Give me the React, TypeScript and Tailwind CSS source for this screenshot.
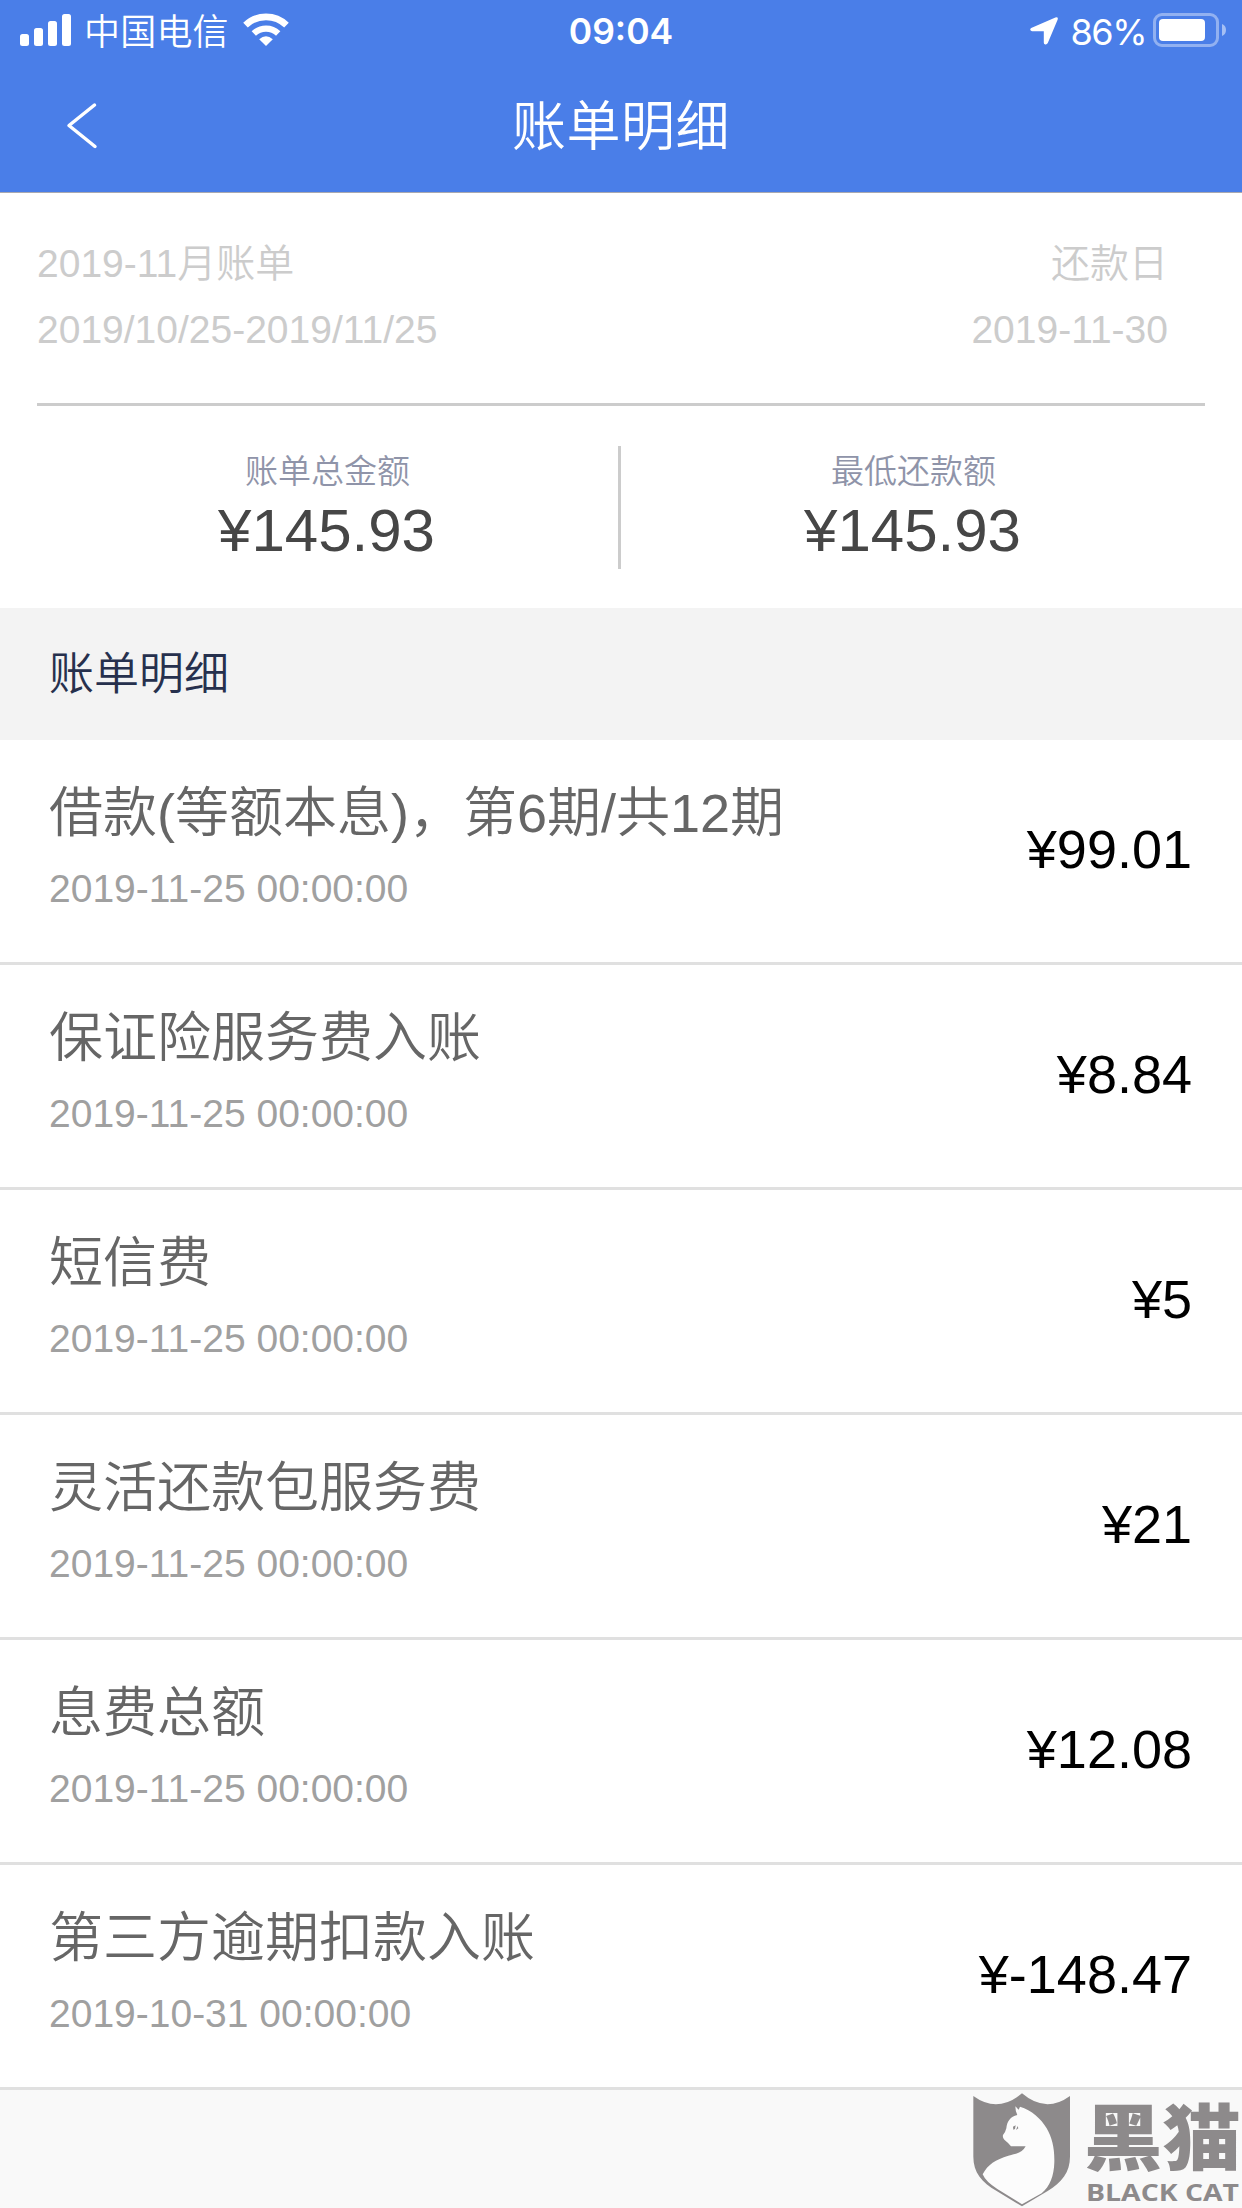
const rows = [
  { title: "借款(等额本息)，第6期/共12期", time: "2019-11-25 00:00:00", amount: "¥99.01" },
  { title: "保证险服务费入账", time: "2019-11-25 00:00:00", amount: "¥8.84" },
  { title: "短信费", time: "2019-11-25 00:00:00", amount: "¥5" },
  { title: "灵活还款包服务费", time: "2019-11-25 00:00:00", amount: "¥21" },
  { title: "息费总额", time: "2019-11-25 00:00:00", amount: "¥12.08" },
  { title: "第三方逾期扣款入账", time: "2019-10-31 00:00:00", amount: "¥-148.47" },
];

function StatusBar() {
  return (
    <div className="relative flex h-[60px] items-center justify-between pl-5 pr-4 text-[36px] leading-[60px]">
      <div className="flex items-center">
        <svg className="h-8 w-[51px]" viewBox="0 0 51 32" fill="currentColor">
          <rect x="0" y="20" width="9" height="12" rx="2.5" />
          <rect x="14" y="14" width="9" height="18" rx="2.5" />
          <rect x="28" y="7" width="9" height="25" rx="2.5" />
          <rect x="42" y="0" width="9" height="32" rx="2.5" />
        </svg>
        <span className="ml-[13px] pt-[5px] font-[350] tracking-[.2px]">中国电信</span>
        <svg className="ml-[14px] -mt-px h-[33px] w-[46px]" viewBox="0 0 46 33" fill="none" stroke="currentColor">
          <path d="M2.5 12.2A29.5 29.5 0 0 1 43.5 12.2" strokeWidth="6.6" />
          <path d="M10.8 20.5A17.5 17.5 0 0 1 35.2 20.5" strokeWidth="6.2" />
          <path d="M23 33 16.2 26.2Q23 20.4 29.8 26.2Z" fill="currentColor" stroke="none" />
        </svg>
      </div>
      <div className="absolute inset-x-0 pt-[3px] text-center font-[Inter] text-[35.5px] font-semibold">09:04</div>
      <div className="flex items-center font-[Inter]">
        <svg className="mr-[13px] mt-px h-7 w-7" viewBox="0 0 28 28" fill="currentColor">
          <path d="M1.2 11 25.4.4Q28.6-.4 27.6 2.8L17.8 26Q16.6 28 14.8 27.2 13.8 26.8 13.8 25.4V14.2H2Q.2 14 .2 12.6.2 11.5 1.2 11Z" />
        </svg>
        <span className="pt-[3px] tracking-[-1.5px]">86%</span>
        <svg className="ml-[7px] h-[34px] w-[73px]" viewBox="0 0 73 34">
          <rect x="1.5" y="1.5" width="63" height="31" rx="7.5" fill="none" stroke="white" strokeOpacity=".4" strokeWidth="3" />
          <rect x="6" y="6" width="46" height="22" rx="4" fill="white" />
          <path d="M69 11Q73 12.5 73 17T69 23Z" fill="white" fillOpacity=".5" />
        </svg>
      </div>
    </div>
  );
}

function Total({ label, value }: { label: string; value: string }) {
  return (
    <div className="flex w-[579px] flex-col items-center">
      <div className="pt-[3px] pl-[2px] text-[33px] leading-[46px] font-[350] text-[#8f94a9]">{label}</div>
      <div className="text-[60px] leading-[72px] text-[#464646]">{value}</div>
    </div>
  );
}

function BlackCatMark() {
  return (
    <svg className="h-[118px] w-[277px]" viewBox="965 2090 277 118" fill="#8d8a8b">
      <g transform="translate(965 2085) scale(.3333)">
        <path d="M25 33Q98 86 171 25 242 86 315 33V215C315 262 290 292 248 318L171 364 95 318C50 292 25 262 25 215Z" />
        <path
          fill="#fcfcfc"
          d="M151 64 161 74 165 65C200 76 228 100 245 130 262 160 269 190 268 232 267 272 255 305 230 325L171 358 97 312Q62 290 53 268C68 238 92 224 130 212 158 206 172 202 182 184L138 184Q132 175 118 164 112 158 114 150 122 140 124 130C126 110 136 94 157 90Q151 78 151 64Z"
        />
        <path d="M152 121 144 125 145 134 150 132ZM158 123 153 135 160 130Z" />
      </g>
      <text x="1084" y="2164" textLength="157" lengthAdjust="spacingAndGlyphs" fontSize="72" className="font-['Noto_Sans_CJK_SC'] font-black">黑猫</text>
      <text x="1086" y="2201" textLength="153" lengthAdjust="spacingAndGlyphs" fontSize="23.5" className="font-['Open_Sans'] font-bold">BLACK CAT</text>
    </svg>
  );
}

export default function App() {
  return (
    <div className="flex h-[2208px] w-[1242px] flex-col overflow-hidden bg-white font-['Liberation_Sans','Noto_Sans_CJK_SC',sans-serif]">
      <header className="h-[193px] shrink-0 border-b border-[#a9a9b0] bg-[#4a7ee8] text-white">
        <StatusBar />
        <div className="relative flex h-[132px] items-center justify-center">
          <svg className="absolute left-[66px] top-[42px] h-[47px] w-8" viewBox="0 0 32 47" fill="none" stroke="white" strokeWidth="3.5" strokeLinecap="round" strokeLinejoin="round">
            <path d="M28.5 3 3 23.5 29 44.5" />
          </svg>
          <h1 className="pt-[2px] text-[54px] leading-[80px] font-[350] tracking-[.5px]">账单明细</h1>
        </div>
      </header>

      <section className="h-[415px] shrink-0 px-[37px] pt-[38px]">
        <div className="flex justify-between pr-[37px] text-[39px] leading-[66px] font-[350] text-[#ccc]">
          <div>
            <div>2019-11月账单</div>
            <div>2019/10/25-2019/11/25</div>
          </div>
          <div className="text-right">
            <div>还款日</div>
            <div>2019-11-30</div>
          </div>
        </div>
        <div className="mt-10 h-[3px] bg-[#ccc]" />
        <div className="mt-10 flex">
          <Total label="账单总金额" value="¥145.93" />
          <div className="mx-[2px] h-[123px] w-[3px] bg-[#ccc]" />
          <Total label="最低还款额" value="¥145.93" />
        </div>
      </section>

      <h2 className="h-[132px] shrink-0 bg-[#f3f3f3] pl-[49px] text-[45px] leading-[133px] font-[350] text-[#26304d]">账单明细</h2>

      <ul className="shrink-0">
        {rows.map((row) => (
          <li key={row.title} className="flex h-[225px] items-center justify-between border-b-[3px] border-[#e0e0e0] pl-[49px] pr-[50px] pb-1">
            <div>
              <div className="text-[54px] leading-[80px] font-[350] text-[#666]">{row.title}</div>
              <div className="text-[39px] leading-[72px] text-[#a0a0a0]">{row.time}</div>
            </div>
            <div className="pt-px text-[54px] text-black">{row.amount}</div>
          </li>
        ))}
      </ul>

      <footer className="flex flex-1 items-end justify-end bg-[#f9f9f9]">
        <BlackCatMark />
      </footer>
    </div>
  );
}
